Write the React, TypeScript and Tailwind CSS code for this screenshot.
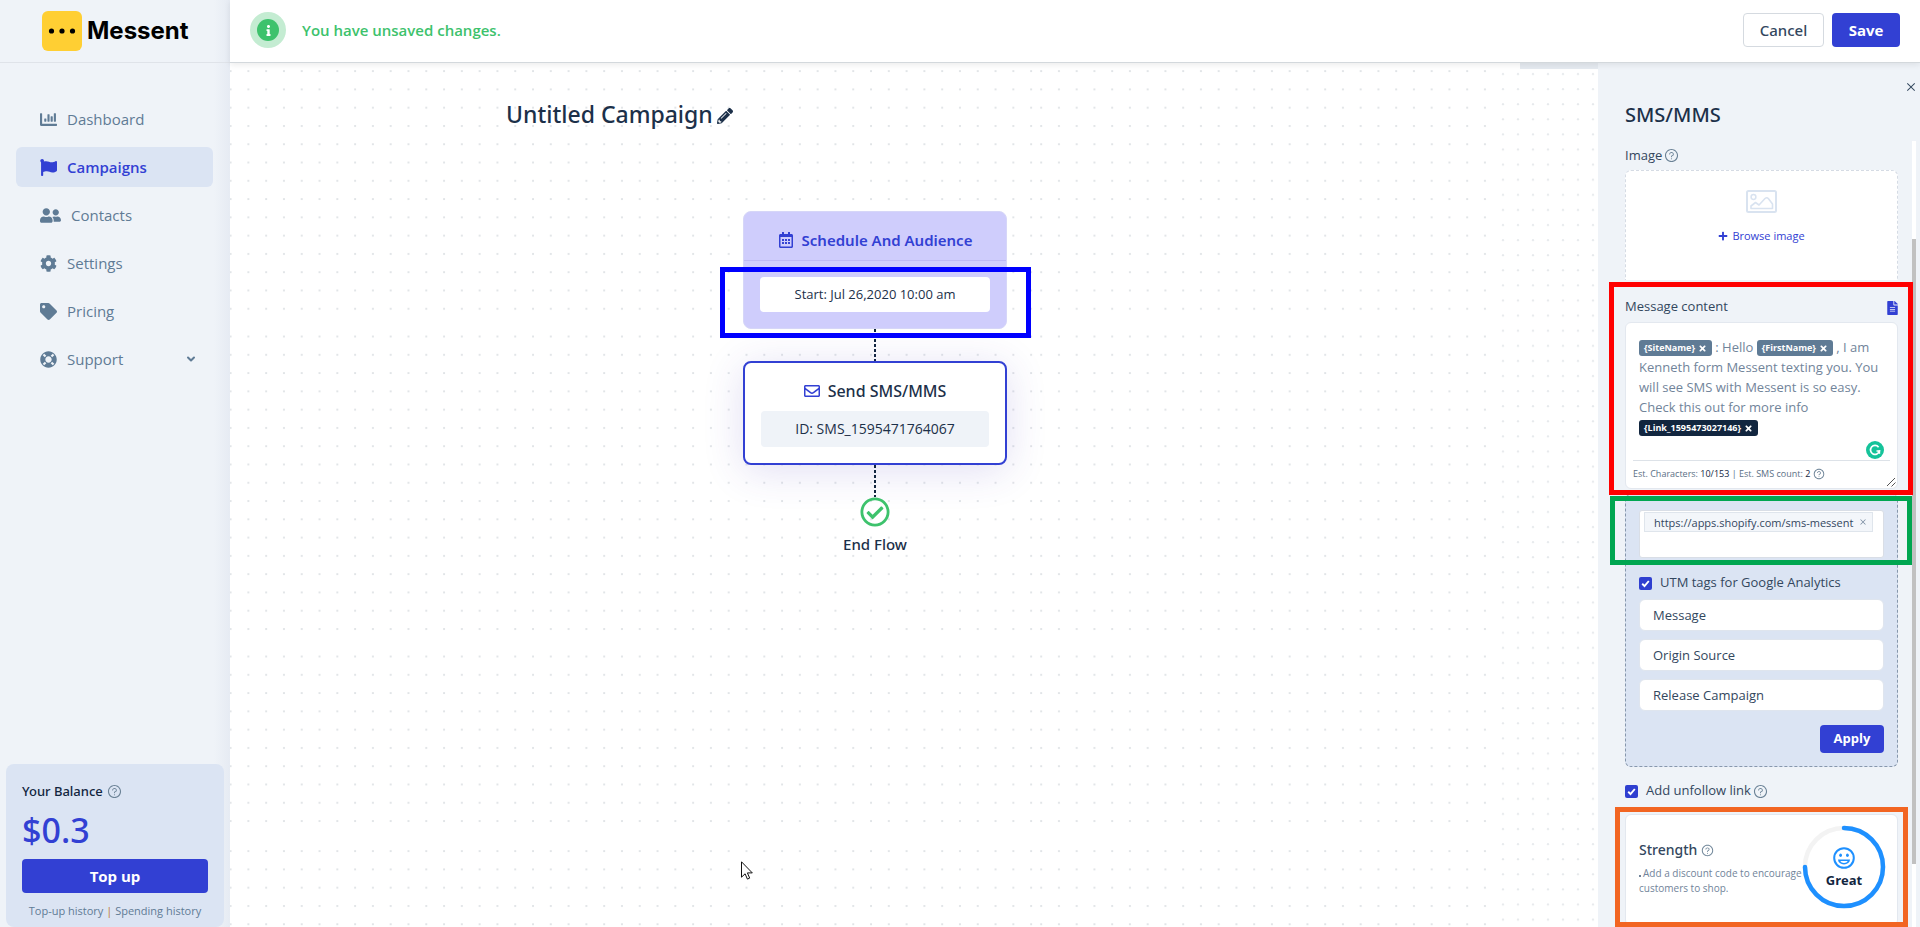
import React from "react";
import {
  FaChartBar,
  FaCog,
  FaFileAlt,
  FaFlag,
  FaInfo,
  FaLifeRing,
  FaPencilAlt,
  FaPlus,
  FaRegCalendarAlt,
  FaRegCheckCircle,
  FaRegEnvelope,
  FaTag,
  FaTimes,
  FaUserFriends,
} from "react-icons/fa";
import { AiOutlineClose, AiOutlineQuestionCircle } from "react-icons/ai";
import { ChevronDown } from "lucide-react";

const navItems = [
  { label: "Dashboard", icon: FaChartBar },
  { label: "Campaigns", icon: FaFlag, active: true },
  { label: "Contacts", icon: FaUserFriends, wide: true },
  { label: "Settings", icon: FaCog },
  { label: "Pricing", icon: FaTag },
  { label: "Support", icon: FaLifeRing, expandable: true },
];

/* Dot tiles: each band repeats its own grid from a starting point. */
const columnBands = [
  { x: 0.6, width: 809, step: 17.79 },
  { x: 811.2, width: 453, step: 17.75 },
];
const rowBands = [
  { y: 8.2, height: 252, step: 18.28 },
  { y: 273.6, height: 305, step: 18.28 },
  { y: 593.6, height: 172, step: 18.28 },
  { y: 788.2, height: 400, step: 18.28 },
];

function DotGrid() {
  return (
    <svg className="absolute inset-0 h-full w-full" aria-hidden="true">
      {columnBands.map((c, ci) =>
        rowBands.map((r, ri) => (
          <React.Fragment key={`${ci}-${ri}`}>
            <pattern
              id={`dots-${ci}-${ri}`}
              patternUnits="userSpaceOnUse"
              x={c.x - 3}
              y={r.y - 3}
              width={c.step}
              height={r.step}
            >
              <circle cx="3" cy="3" r="1.1" fill="#dde1e4" />
            </pattern>
            <rect x={c.x - 3} y={r.y - 3} width={c.width} height={r.height} fill={`url(#dots-${ci}-${ri})`} />
          </React.Fragment>
        )),
      )}
      <pattern id="dots-side" patternUnits="userSpaceOnUse" x="1270" y="8" width="15" height="15.1">
        <circle cx="3" cy="3" r="1.1" fill="#e6e9ec" />
      </pattern>
      <rect x="1270" y="8" width="98" height="1200" fill="url(#dots-side)" />
    </svg>
  );
}

function Help({ className = "size-[15px]" }: { className?: string }) {
  return <AiOutlineQuestionCircle className={`shrink-0 text-[#6b8296] ${className}`} aria-label="Help" />;
}

function Sidebar() {
  return (
    <aside className="flex w-[230px] shrink-0 flex-col bg-[linear-gradient(to_left,#e6ebf3,#eff3f8_16px)]">
      <div className="flex h-[63px] items-center gap-[5px] border-b border-[#dfe3e9] pl-[42px]">
        <svg viewBox="0 0 40 40" className="size-10" aria-hidden="true">
          <rect width="40" height="40" rx="6" fill="#ffcf33" />
          <circle cx="9.500" cy="20" r="2.600" />
          <circle cx="20" cy="20" r="2.600" />
          <circle cx="30.500" cy="20" r="2.600" />
        </svg>
        <span className="font-[Inter,sans-serif] text-[24px] leading-none font-bold text-black">Messent</span>
      </div>
      <nav className="mt-9 flex flex-col gap-2 pr-[17px] pl-4">
        {navItems.map(({ label, icon: Icon, active, wide, expandable }) => (
          <a
            key={label}
            href="#"
            className={`flex h-10 items-center gap-[10px] rounded-md px-6 text-[15px] ${
              active ? "bg-[#dbe4f3] font-semibold text-[#3240d3]" : "text-[#5f7b95]"
            }`}
          >
            <Icon className={`shrink-0 ${wide ? "size-[21px]" : "size-[17px]"}`} />
            {label}
            {expandable && <ChevronDown strokeWidth={4} className="-mr-[8px] ml-auto size-3" />}
          </a>
        ))}
      </nav>
      <section className="mx-[6px] mt-auto rounded-lg bg-[#dbe4f3] px-4 pt-4 pb-[6px]">
        <h2 className="flex items-center gap-1 font-['Noto_Sans',sans-serif] text-[13px] leading-[22px] font-medium text-[#12263f]">
          Your Balance <Help />
        </h2>
        <p className="mb-[1px] font-['Noto_Sans',sans-serif] text-[34px] leading-[56px] font-medium text-[#3240d3]">
          $0.3
        </p>
        <button className="block h-[34px] w-full rounded bg-[#3240d3] text-[15px] font-bold text-white">Top up</button>
        <p className="pt-2 text-center text-[11px] leading-5 whitespace-nowrap text-[#5f7b95]">
          <a href="#">Top-up history</a> <span className="text-[#c07a1e]">|</span> <a href="#">Spending history</a>
        </p>
      </section>
    </aside>
  );
}

function Connector() {
  return (
    <div className="mx-auto h-[32px] w-[2px] bg-[repeating-linear-gradient(to_bottom,#12263f_0_3px,transparent_3px_5px)]" />
  );
}

function Canvas() {
  return (
    <main className="relative min-w-0 flex-1 font-['Noto_Sans',sans-serif] text-[#1c3049]">
      <div className="mx-auto flex w-[738px] items-center gap-1 pt-8">
        <h1 className="text-[23px] leading-[38px] font-medium">Untitled Campaign</h1>
        <button aria-label="Rename campaign" className="pt-1">
          <FaPencilAlt className="size-4" />
        </button>
      </div>
      <div className="mx-auto flex w-[264px] flex-col pt-[78px]">
        <section className="relative rounded-lg border border-[#d6d6f8] bg-[#cfcdfc]">
          <h2 className="flex h-[49px] items-center justify-center gap-2 border-b border-[#bcb8f5] pt-2 text-[15px] font-semibold text-[#3240d3]">
            <FaRegCalendarAlt className="size-4" /> Schedule And Audience
          </h2>
          <div className="px-4 py-4">
            <p className="rounded bg-white text-center font-['Open_Sans',sans-serif] text-[13px] leading-[35px]">
              Start: Jul 26,2020 10:00 am
            </p>
          </div>
          <div className="pointer-events-none absolute top-[55px] -right-[25px] -bottom-[10px] -left-[24px] border-[5px] border-[#0000ff]" />
        </section>
        <Connector />
        <section className="rounded-lg border-2 border-[#3240d3] bg-white px-4 pt-[10px] pb-4 shadow-[0_6px_40px_rgba(70,50,180,0.16)]">
          <h2 className="mb-[2px] flex h-9 items-center justify-center gap-2 text-[16px] font-medium">
            <FaRegEnvelope className="size-4 text-[#3240d3]" /> Send SMS/MMS
          </h2>
          <p className="rounded bg-[#eff3f8] text-center font-['Open_Sans',sans-serif] text-[14px] leading-9">
            ID: SMS_1595471764067
          </p>
        </section>
        <Connector />
        <FaRegCheckCircle className="mx-auto size-[30px] text-[#3dc26c]" />
        <p className="pt-[3px] text-center text-[15px] leading-7 font-medium">End Flow</p>
      </div>
      <svg viewBox="0 0 12 19" className="absolute top-[798px] left-[511px] h-[19px] w-3" aria-hidden="true">
        <path d="M.5.800v15.400l3.600-3.400 2.300 5.300 2.300-1-2.300-5.200h4.900z" fill="#fff" stroke="#111" />
      </svg>
    </main>
  );
}

function Token({ label, dark = false }: { label: string; dark?: boolean }) {
  return (
    <span
      className={`inline-flex h-4 items-center gap-[3px] rounded-[3px] px-[5px] align-text-bottom text-[9px] leading-4 font-bold text-white ${
        dark ? "bg-[#12263f]" : "bg-[#5f7b95]"
      }`}
    >
      {label}
      <button aria-label={`Remove ${label}`}>
        <FaTimes className="size-[9px]" />
      </button>
    </span>
  );
}

function Tick({ id }: { id: string }) {
  return (
    <span className="relative flex size-[13px] shrink-0">
      <input id={id} type="checkbox" defaultChecked className="size-full appearance-none rounded-[2px] bg-[#2f3fd0]" />
      <svg viewBox="0 0 13 13" className="pointer-events-none absolute inset-0" aria-hidden="true">
        <path d="M3.200 6.800l2.300 2.200 4.300-5" fill="none" stroke="#fff" strokeWidth="1.900" />
      </svg>
    </span>
  );
}

function MessageEditor() {
  return (
    <section className="relative pt-[14px]">
      <div className="mb-[2px] flex h-[26px] items-center justify-between text-[13px] text-[#33475e]">
        <span id="message-label">Message content</span>
        <button aria-label="Templates" className="pt-[2px]">
          <FaFileAlt className="h-[14px] w-[11px] text-[#3240d3]" />
        </button>
      </div>
      <div className="relative h-[167px] rounded-md border border-[#e3e8ef] bg-white">
        <div
          role="textbox"
          aria-multiline="true"
          aria-labelledby="message-label"
          className="px-[13px] pt-[14px] text-[13px] leading-5 whitespace-nowrap text-[#71849a]"
        >
          <Token label="{SiteName}" /> : Hello <Token label="{FirstName}" /> , I am
          <br />
          Kenneth form Messent texting you. You
          <br />
          will see SMS with Messent is so easy.
          <br />
          Check this out for more info
          <br />
          <Token label="{Link_1595473027146}" dark />
        </div>
        <svg viewBox="0 0 18 18" className="absolute right-[13px] bottom-[29px] size-[18px]" aria-hidden="true">
          <circle cx="9" cy="9" r="9" fill="#15c39a" />
          <path d="M12.600 6.200A4.500 4.500 0 1 0 13.400 10H10.500" fill="none" stroke="#fff" strokeWidth="1.700" />
          <path d="M13.400 9.200v3.600" stroke="#fff" strokeWidth="1.600" />
        </svg>
        <div className="absolute inset-x-[7px] bottom-0 flex h-7 items-center gap-[3px] border-t border-[#dde2e8] pb-[2px] text-[9px] text-[#5b6f85]">
          <span>
            Est. Characters: <span className="text-[#12263f]">10/153</span> | Est. SMS count:{" "}
            <span className="text-[#12263f]">2</span>
          </span>
          <Help className="size-[12px]" />
        </div>
        <svg viewBox="0 0 10 10" className="absolute right-[1px] bottom-[1px] size-[10px]" aria-hidden="true">
          <path d="M1 9L9 1M5.500 9.500L9.500 5.500" stroke="#555" strokeWidth="1" />
        </svg>
      </div>
      <div className="pointer-events-none absolute top-[2px] -right-[15px] -bottom-[6px] -left-[16px] z-10 border-[5px] border-[#ff0000]" />
    </section>
  );
}

const utmFields = ["Message", "Origin Source", "Release Campaign"];

function LinkSettings() {
  return (
    <section className="relative mt-[5px] rounded-md border border-dashed border-[#8797ac] bg-[#dbe4f3] px-[13px] pt-[15px] pb-[13px] text-[13px] text-[#33475e]">
      <div className="h-12 rounded-[3px] border border-[#d9dee6] bg-white py-[1px] pl-[4px]">
        <span className="flex h-5 w-fit items-center gap-[6px] border border-[#dfe5ec] bg-[#f3f6fa] pr-[5px] pl-[9px] text-[11px] leading-none whitespace-nowrap">
          https://apps.shopify.com/sms-messent
          <button aria-label="Remove link">
            <AiOutlineClose className="size-[8px] text-[#71849a]" />
          </button>
        </span>
      </div>
      <label htmlFor="utm" className="flex h-[41px] items-center gap-2 pt-[9px]">
        <Tick id="utm" /> UTM tags for Google Analytics
      </label>
      <div className="flex flex-col gap-2">
        {utmFields.map((field) => (
          <input
            key={field}
            aria-label={field}
            defaultValue={field}
            className="h-8 w-full rounded-md border border-[#dfe5ee] bg-white px-[13px] text-[13px]"
          />
        ))}
      </div>
      <button className="mt-[14px] ml-auto block h-7 w-16 rounded bg-[#3240d3] text-[13px] font-bold text-white">
        Apply
      </button>
      <div className="pointer-events-none absolute top-[1px] -right-[15px] -left-[16px] h-[69px] border-[5px] border-[#00a651]" />
    </section>
  );
}

function Strength() {
  return (
    <section className="relative mt-3 flex h-[112px] rounded-md border border-[#e3e8ef] bg-white pl-[13px]">
      <div className="w-[160px] shrink-0 pt-6">
        <h3 className="flex items-center gap-1 font-['Noto_Sans',sans-serif] text-[14px] leading-[22px] font-medium text-[#33475e]">
          Strength <Help className="size-[13px]" />
        </h3>
        <p className="pt-[5px] text-[10px] leading-[15px] whitespace-nowrap text-[#71849a]">
          <span className="mr-[2px] inline-block size-[2px] bg-current" />
          Add a discount code to encourage
          <br />
          customers to shop.
        </p>
      </div>
      <div className="relative mt-[10px] ml-[3px] flex size-[84px] flex-col items-center pt-[22px]">
        <svg viewBox="0 0 84 84" className="absolute inset-0" aria-hidden="true">
          <circle cx="42" cy="42" r="39" fill="none" stroke="#f3f3f3" strokeWidth="4.500" />
          <path d="M42 3A39 39 0 1 1 3 42" fill="none" stroke="#1e90ff" strokeWidth="4.500" strokeLinecap="round" />
        </svg>
        <svg viewBox="0 0 22 22" className="size-[22px]" aria-hidden="true">
          <circle cx="11" cy="11" r="9.800" fill="none" stroke="#1e90ff" strokeWidth="2" />
          <ellipse cx="7.600" cy="8.300" rx="1.400" ry="1.700" fill="#1e90ff" />
          <ellipse cx="14.400" cy="8.300" rx="1.400" ry="1.700" fill="#1e90ff" />
          <path d="M5 12.500h12a6 5 0 0 1-12 0zM7.200 14a4 3 0 0 0 7.600 0z" fill="#1e90ff" fillRule="evenodd" />
        </svg>
        <strong className="text-[13px] leading-[22px] text-[#12263f]">Great</strong>
      </div>
      <div className="pointer-events-none absolute -top-[8px] -right-[11px] -bottom-[2px] -left-[11px] border-[5px] border-[#f26522]" />
    </section>
  );
}

function DetailPanel() {
  return (
    <aside className="relative flex w-[400px] shrink-0">
      <div className="h-[6px] w-[78px] bg-[#e5eaf0]" />
      <div className="relative flex-1 overflow-hidden bg-[#eff3f8] pr-[22px] pl-[27px]">
        <button aria-label="Close panel" className="absolute top-[18px] right-[3px]">
          <AiOutlineClose className="size-3 text-[#33475e]" />
        </button>
        <h2 className="pt-[38px] font-['Noto_Sans',sans-serif] text-[20px] leading-7 font-medium text-[#1c3049]">
          SMS/MMS
        </h2>
        <p className="flex items-center gap-[2px] pt-[15px] text-[13px] leading-[22px] text-[#33475e]">
          Image <Help />
        </p>
        <div className="mt-1 flex h-[110px] flex-col items-center rounded-t-md border border-b-0 border-dashed border-[#d5dbe4] bg-white pt-[19px]">
          <svg viewBox="0 0 31 23" className="h-[23px] w-[31px]" fill="none" stroke="#d9e3f0" aria-hidden="true">
            <rect x="1" y="1" width="29" height="21" rx="1.500" strokeWidth="2" />
            <circle cx="7.500" cy="7" r="2.400" strokeWidth="1.500" />
            <path
              d="M5 18.500v-2.500l4.500-3.500 3.500 2.500 6-6.500c1.200-1 2.500-1 3.500.200l4 5.300v4.500z"
              strokeWidth="1.600"
              strokeLinejoin="round"
            />
          </svg>
          <button className="mt-[13px] flex items-center gap-1 text-[11px] leading-5 text-[#3240d3]">
            <FaPlus className="size-[10px]" /> Browse image
          </button>
        </div>
        <MessageEditor />
        <LinkSettings />
        <label htmlFor="unfollow" className="mt-[13px] flex h-[22px] items-center gap-2 text-[13px] text-[#33475e]">
          <Tick id="unfollow" />
          <span className="flex items-center gap-[2px]">
            Add unfollow link <Help />
          </span>
        </label>
        <Strength />
        <div className="absolute top-[78px] right-[4px] bottom-0 w-1 bg-white">
          <div className="mt-[98px] h-[625px] bg-[#c1c1c1]" />
        </div>
      </div>
    </aside>
  );
}

export default function App() {
  return (
    <div className="flex h-screen overflow-hidden bg-white font-['Open_Sans','Noto_Sans',sans-serif]">
      <Sidebar />
      <div className="flex min-w-0 flex-1 flex-col">
        <header className="z-20 flex h-[63px] shrink-0 items-center border-b border-[#d3d8dc] bg-white px-5 pb-[2px] shadow-[0_2px_6px_rgba(0,0,0,0.08)]">
          <span className="flex size-9 items-center justify-center rounded-full bg-[#c4ecd2]">
            <span className="flex size-[22px] items-center justify-center rounded-full bg-[#3dc26c] text-white">
              <FaInfo className="size-[11px]" />
            </span>
          </span>
          <p className="pl-4 text-[15px] font-semibold text-[#3dc26c]">You have unsaved changes.</p>
          <div className="ml-auto flex gap-2">
            <button className="h-[34px] w-[81px] rounded border border-[#d5dae0] bg-white font-['Noto_Sans',sans-serif] text-[15px] font-medium text-[#33475e]">
              Cancel
            </button>
            <button className="h-[34px] w-[68px] rounded bg-[#3240d3] text-[15px] font-bold text-white">Save</button>
          </div>
        </header>
        <div className="relative flex min-h-0 flex-1">
          <DotGrid />
          <Canvas />
          <DetailPanel />
        </div>
      </div>
    </div>
  );
}
